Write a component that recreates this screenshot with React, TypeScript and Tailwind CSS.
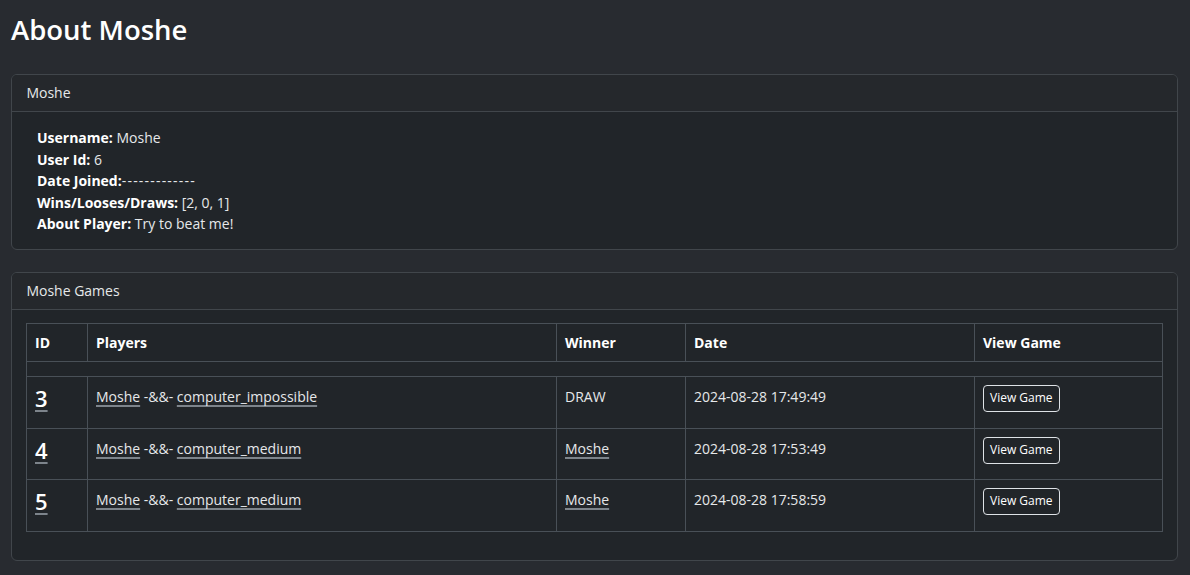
import React from 'react'

const games = [
  { id: 3, opponent: 'computer_impossible', winner: 'DRAW', date: '2024-08-28 17:49:49' },
  { id: 4, opponent: 'computer_medium', winner: 'Moshe', date: '2024-08-28 17:53:49' },
  { id: 5, opponent: 'computer_medium', winner: 'Moshe', date: '2024-08-28 17:58:59' },
]

const link = 'underline decoration-[#7d848b] underline-offset-[3px] decoration-[1.5px]'

function Card({ title, children }: { title: string; children: React.ReactNode }) {
  return (
    <div className="border border-[#41464b] rounded-[6px] bg-[#212529] overflow-hidden">
      <div className="h-[37px] px-[14.4px] flex items-center bg-[#25282c] border-b border-[#41464b]">{title}</div>
      {children}
    </div>
  )
}

export default function App() {
  return (
    <div
      className="min-h-[575px] bg-[#282b30] text-[#e6e8ea] text-[14px] leading-[21.6px] pl-[11px] pr-[12px] pb-4"
      style={{ fontFamily: '"Open Sans", "Noto Sans", sans-serif' }}
    >
      <h1 className="text-[27.5px] font-semibold text-white pt-[12px] h-[74px] leading-[36px]">About Moshe</h1>

      <Card title="Moshe">
        <div className="pl-[25px] pt-[15px] pb-[14px]">
          <div><b className="text-white">Username:</b> Moshe</div>
          <div><b className="text-white">User Id:</b> 6</div>
          <div><b className="text-white">Date Joined:</b><span className="tracking-[1.2px]">-------------</span></div>
          <div><b className="text-white">Wins/Looses/Draws:</b> [2, 0, 1]</div>
          <div><b className="text-white">About Player:</b> Try to beat me!</div>
        </div>
      </Card>

      <div className="h-[22px]" />

      <Card title="Moshe Games">
        <div className="px-[14px] pt-[13px] pb-[28px]">
          <table className="w-full border-collapse border border-[#495057]">
            <colgroup>
              <col className="w-[61px]" />
              <col className="w-[469px]" />
              <col className="w-[129px]" />
              <col className="w-[289px]" />
              <col />
            </colgroup>
            <thead>
              <tr className="h-[38px] font-bold text-white">
                {['ID', 'Players', 'Winner', 'Date', 'View Game'].map((h) => (
                  <th key={h} className="border border-[#495057] px-[8px] text-left font-bold">{h}</th>
                ))}
              </tr>
            </thead>
            <tbody>
              <tr className="h-[15px]">
                <td colSpan={5} className="border border-[#495057]" />
              </tr>
              {games.map((g, i) => (
                <tr key={g.id} className={`${i === 1 ? 'h-[51px]' : 'h-[52px]'} align-top`}>
                  <td className="border border-[#495057] px-[8px] pt-[7px]">
                    <span className={`text-[22px] leading-[28px] font-semibold text-white ${link}`}>{g.id}</span>
                  </td>
                  <td className="border border-[#495057] px-[8px] pt-[9px]">
                    <span className={link}>Moshe</span> -&amp;&amp;- <span className={link}>{g.opponent}</span>
                  </td>
                  <td className="border border-[#495057] px-[8px] pt-[9px]">
                    {g.winner === 'DRAW' ? 'DRAW' : <span className={link}>{g.winner}</span>}
                  </td>
                  <td className="border border-[#495057] px-[8px] pt-[9px]">{g.date}</td>
                  <td className="border border-[#495057] px-[8px] pt-[8px]">
                    <button className="h-[27px] px-[6px] border border-[#dee2e6] rounded-[4px] text-[12px] text-white leading-none">
                      View Game
                    </button>
                  </td>
                </tr>
              ))}
            </tbody>
          </table>
        </div>
      </Card>
    </div>
  )
}
